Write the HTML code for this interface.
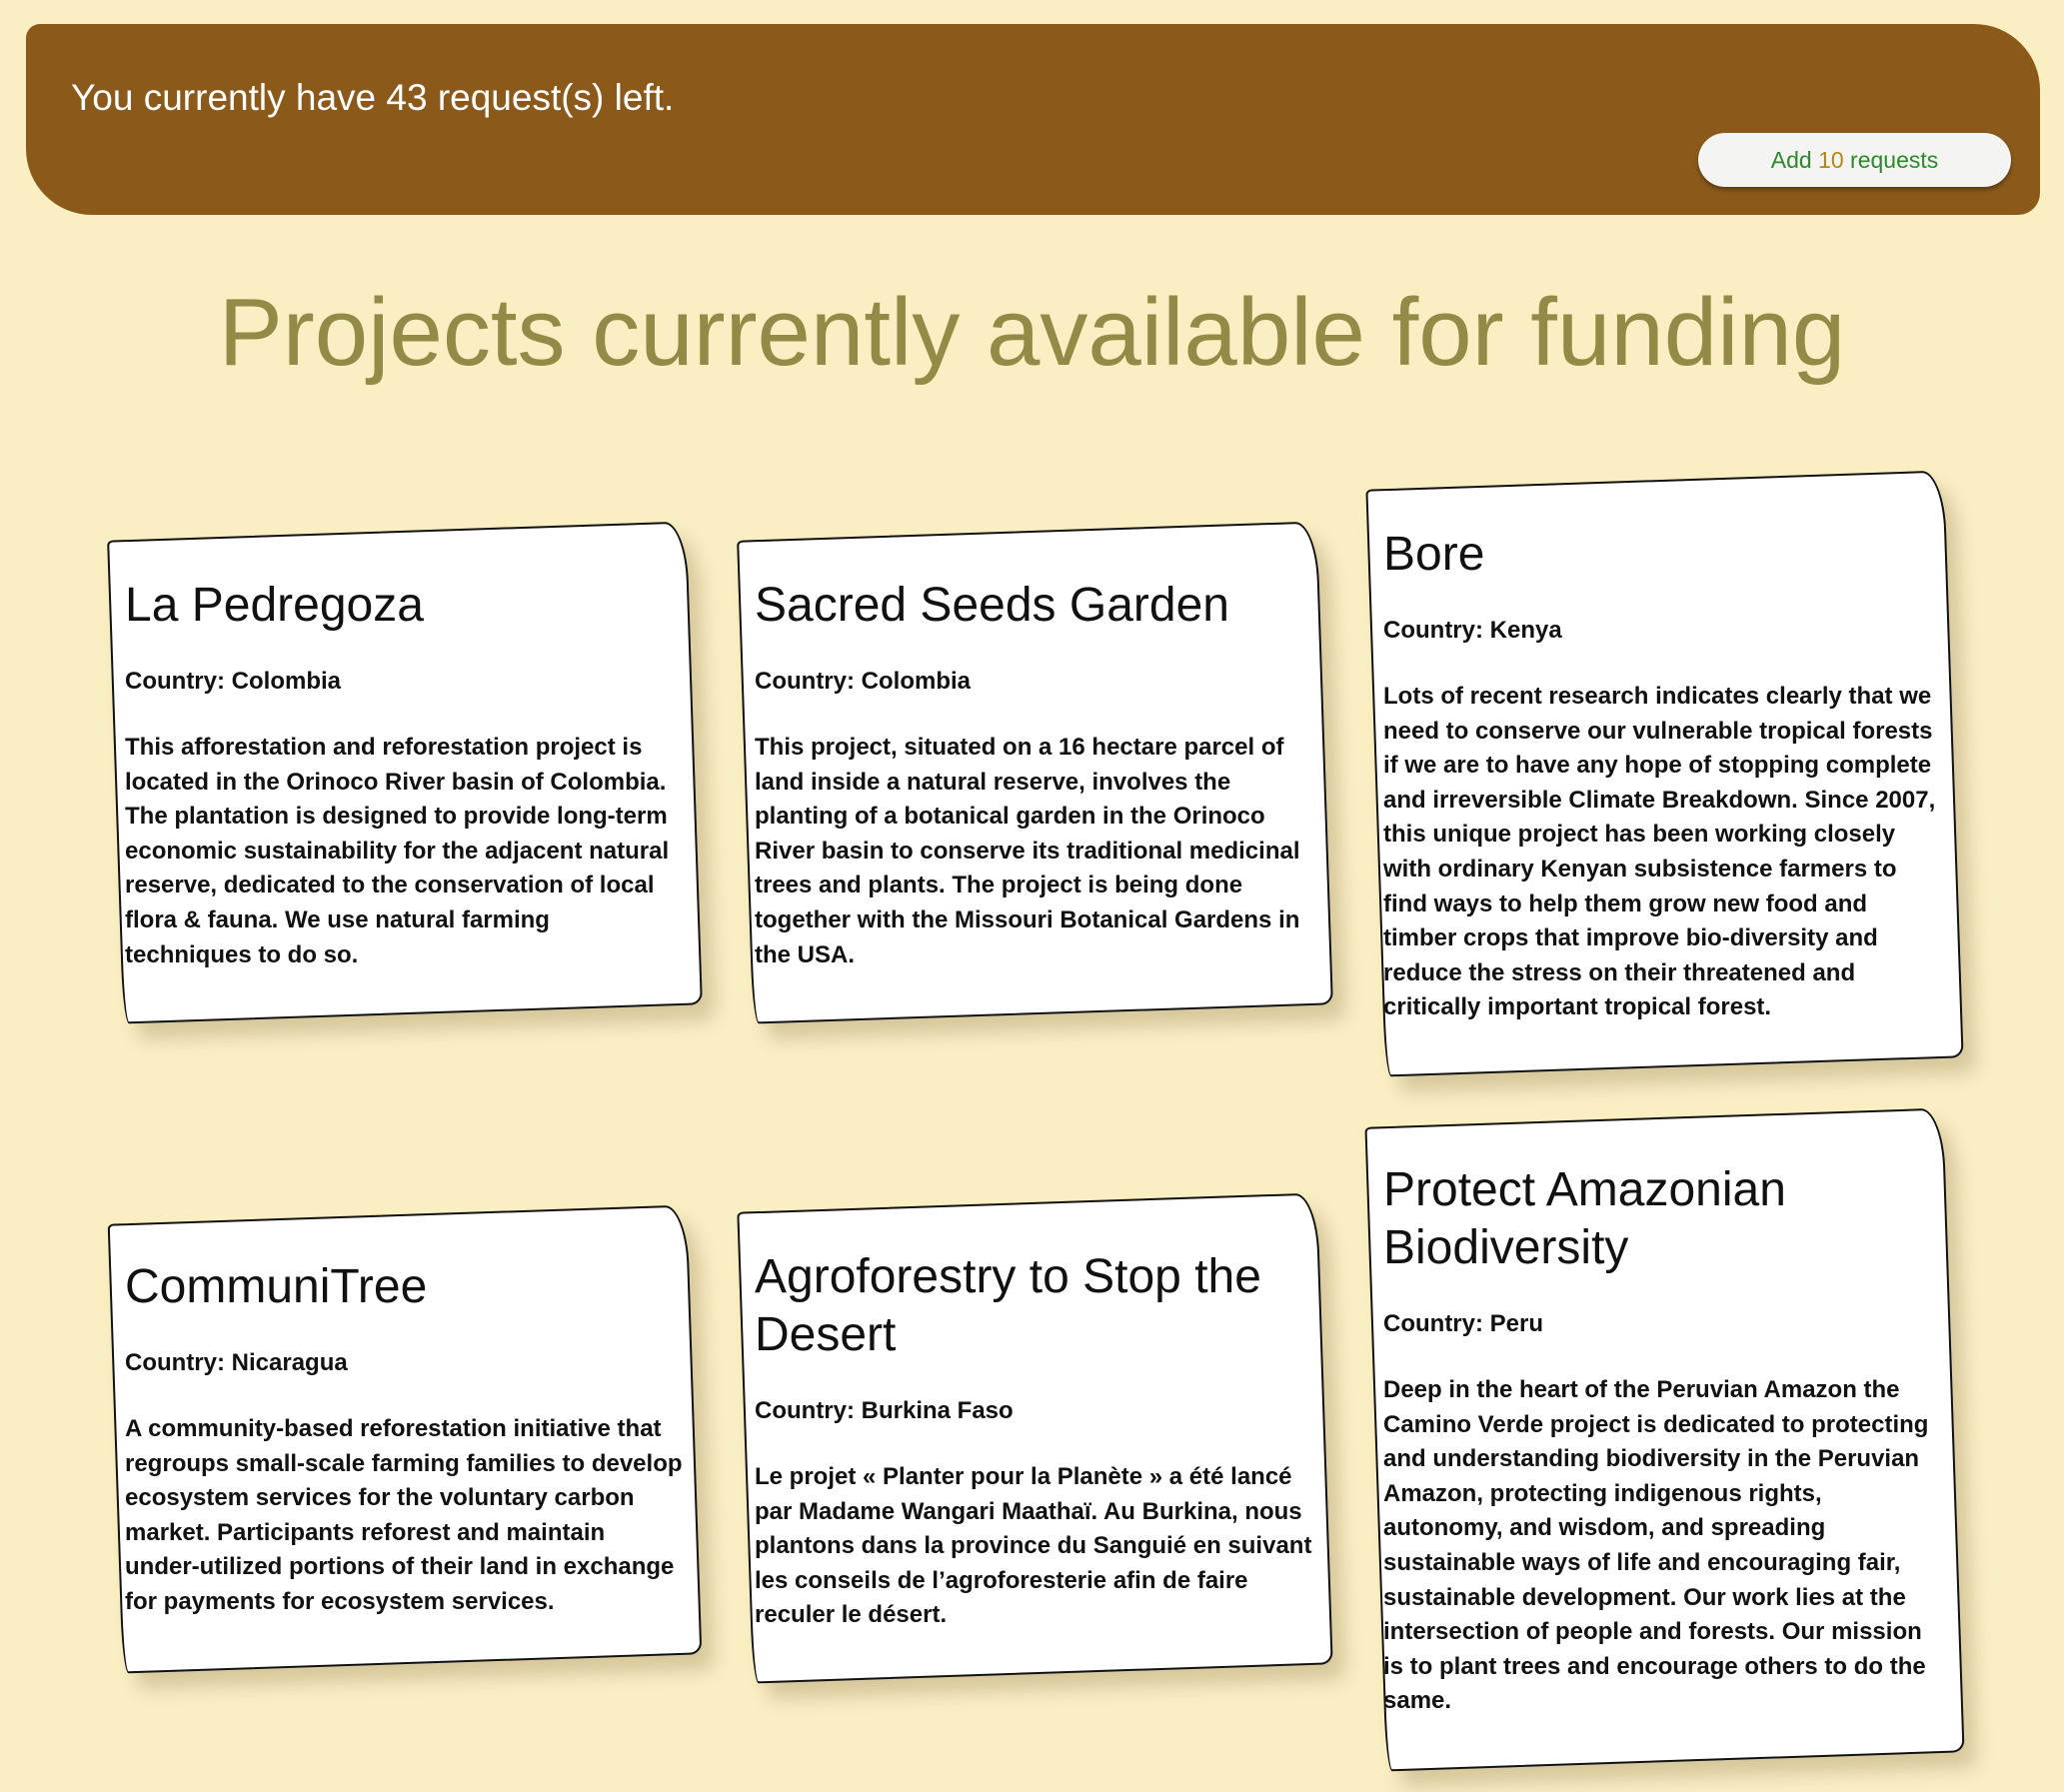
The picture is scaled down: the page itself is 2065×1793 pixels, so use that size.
<!DOCTYPE html>
<html><head><meta charset="utf-8"><style>
html,body{margin:0;padding:0}
body{width:2065px;height:1793px;background:#FAEEC3;position:relative;overflow:hidden;font-family:"Liberation Sans",Arial,sans-serif}
.banner{position:absolute;left:26px;top:24px;width:2015px;height:191px;background:#8B5A1B;border-radius:14px 66px 22px 66px}
.banner .t{position:absolute;left:45px;top:52px;color:#fff;font-size:37px;line-height:44px}
.btn{position:absolute;left:1673px;top:109px;width:313px;height:54px;border-radius:27px;background:#f4f4f2;box-shadow:0 3px 4px rgba(0,0,0,.35);color:#2b8a2b;font-size:23px;line-height:54px;text-align:center}
h1{position:absolute;left:0;width:2065px;top:268px;margin:0;text-align:center;font-weight:normal;font-size:96px;line-height:130px;color:#948A47}
.card{position:absolute}
.card .bg{position:absolute;left:10px;right:7px;top:10px;bottom:8px;background:#fff;border:2.5px solid #111;transform:rotate(-1.9deg);border-radius:6px 22px 12px 6px/5px 60px 12px 60px;box-shadow:12px 16px 18px rgba(90,70,20,.22)}
.card .c{position:absolute;left:20px;width:555px;top:56px}
.card h2{margin:0;font-weight:normal;font-size:48px;line-height:58px;color:#111}
.card .k{margin-top:29px;font-weight:bold;font-size:24px;line-height:35px;color:#111}
.card .b{margin-top:32px;font-weight:bold;font-size:24px;line-height:34.6px;color:#111}
</style></head><body>
<div class="banner"><div class="t">You currently have 43 request(s) left.</div><div class="btn">Add <span style="color:#b8860b">10</span> requests</div></div>
<h1>Projects currently available for funding</h1>

<div class="card" style="left:105px;top:521px;width:597px;height:502px"><div class="bg"></div><div class="c" style="width:546px">
<h2>La Pedregoza</h2><div class="k">Country: Colombia</div>
<div class="b">This afforestation and reforestation project is located in the Orinoco River basin of Colombia. The plantation is designed to provide long-term economic sustainability for the adjacent natural reserve, dedicated to the conservation of local flora &amp; fauna. We use natural farming techniques to do so.</div></div></div>

<div class="card" style="left:735px;top:521px;width:598px;height:502px"><div class="bg"></div><div class="c">
<h2>Sacred Seeds Garden</h2><div class="k">Country: Colombia</div>
<div class="b">This project, situated on a 16 hectare parcel of land inside a natural reserve, involves the planting of a botanical garden in the Orinoco River basin to conserve its traditional medicinal trees and plants. The project is being done together with the Missouri Botanical Gardens in the USA.</div></div></div>

<div class="card" style="left:1366px;top:470px;width:596px;height:606px"><div class="bg"></div><div class="c" style="left:18px">
<h2>Bore</h2><div class="k">Country: Kenya</div>
<div class="b">Lots of recent research indicates clearly that we need to conserve our vulnerable tropical forests if we are to have any hope of stopping complete and irreversible Climate Breakdown. Since 2007, this unique project has been working closely with ordinary Kenyan subsistence farmers to find ways to help them grow new food and timber crops that improve bio-diversity and reduce the stress on their threatened and critically important tropical forest.</div></div></div>

<div class="card" style="left:105px;top:1205px;width:597px;height:468px"><div class="bg"></div><div class="c" style="top:54px;width:561px">
<h2>CommuniTree</h2><div class="k">Country: Nicaragua</div>
<div class="b">A community-based reforestation initiative that regroups small-scale farming families to develop ecosystem services for the voluntary carbon market. Participants reforest and maintain under-utilized portions of their land in exchange for payments for ecosystem services.</div></div></div>

<div class="card" style="left:735px;top:1193px;width:598px;height:490px"><div class="bg"></div><div class="c" style="width:561px">
<h2>Agroforestry to Stop the Desert</h2><div class="k">Country: Burkina Faso</div>
<div class="b">Le projet « Planter pour la Planète » a été lancé par Madame Wangari Maathaï. Au Burkina, nous plantons dans la province du Sanguié en suivant les conseils de l’agroforesterie afin de faire reculer le désert.</div></div></div>

<div class="card" style="left:1366px;top:1108px;width:596px;height:663px"><div class="bg"></div><div class="c" style="left:18px;top:54px">
<h2>Protect Amazonian Biodiversity</h2><div class="k">Country: Peru</div>
<div class="b">Deep in the heart of the Peruvian Amazon the Camino Verde project is dedicated to protecting and understanding biodiversity in the Peruvian Amazon, protecting indigenous rights, autonomy, and wisdom, and spreading sustainable ways of life and encouraging fair, sustainable development. Our work lies at the intersection of people and forests. Our mission is to plant trees and encourage others to do the same.</div></div></div>
</body></html>
